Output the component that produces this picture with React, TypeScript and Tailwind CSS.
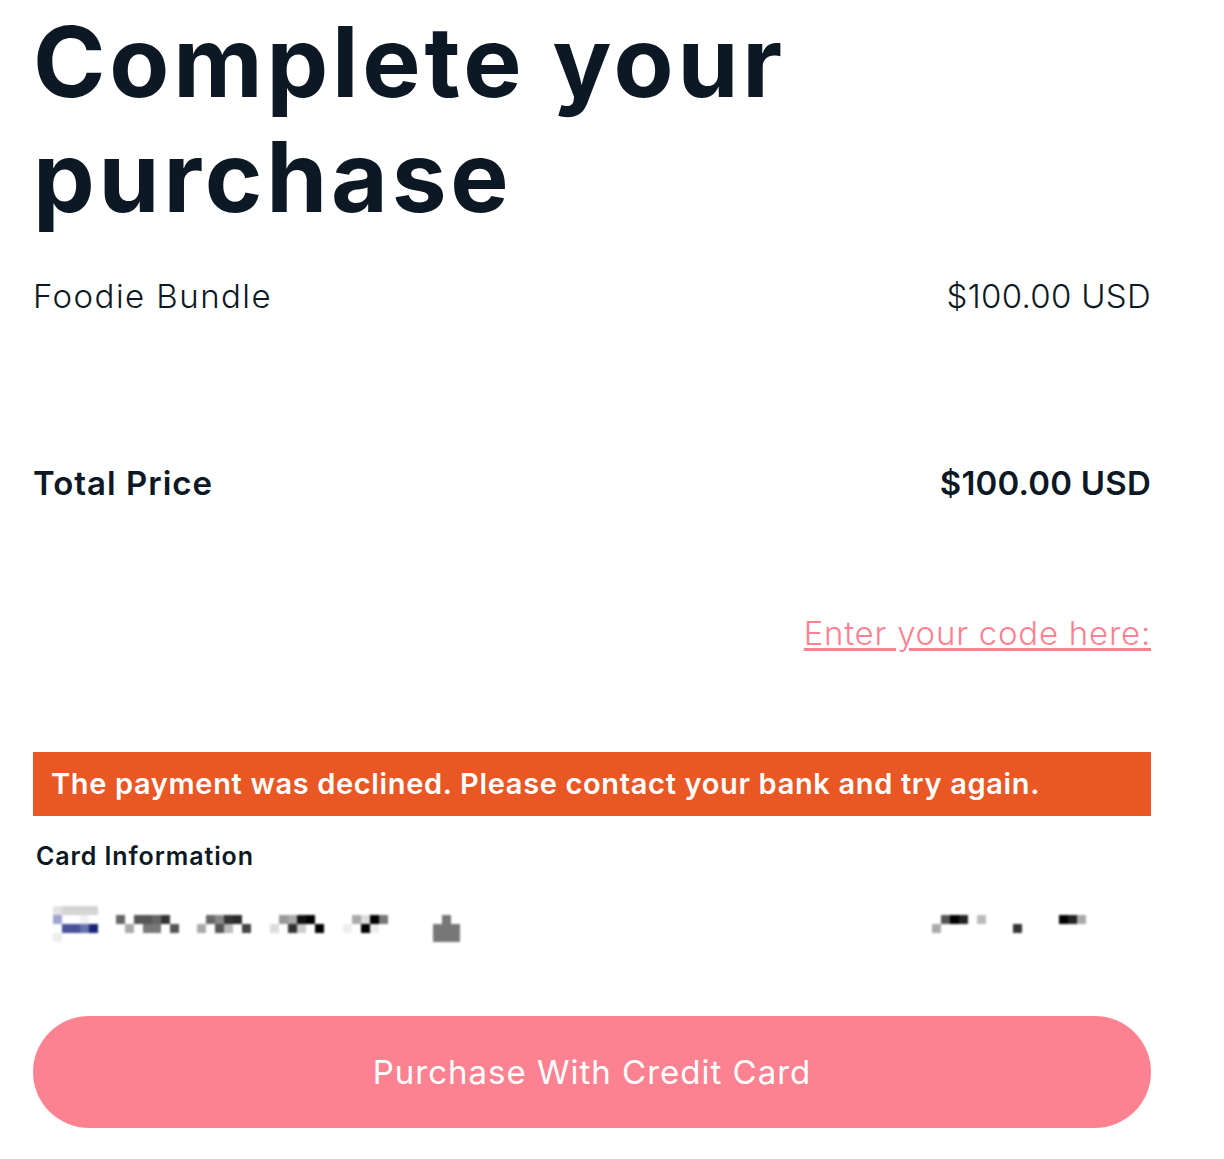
const pixels: [number, number, string][] = [
  // card brand icon
  [53, 906, '#e2e2e2'], [62, 906, '#d4d4d4'], [71, 906, '#d4d4d4'], [80, 906, '#d4d4d4'], [89, 906, '#d4d4d4'],
  [53, 915, '#a0a4d0'], [80, 915, '#f0f0f8'],
  [62, 924, '#4a5298'], [71, 924, '#4a5298'], [80, 924, '#6a70a8'], [89, 924, '#1a2478'],
  [53, 933, '#eeeeee'],
  // card number
  [116, 915, '#666666'], [134, 915, '#555555'], [143, 915, '#555555'], [152, 915, '#666666'], [161, 915, '#333333'],
  [125, 924, '#aaaaaa'], [143, 924, '#777777'], [152, 924, '#777777'], [170, 924, '#555555'],
  [206, 915, '#666666'], [215, 915, '#888888'], [224, 915, '#333333'], [233, 915, '#2a2a2a'],
  [197, 924, '#aaaaaa'], [215, 924, '#555555'], [224, 924, '#bbbbbb'], [242, 924, '#444444'],
  [279, 915, '#999999'], [288, 915, '#aaaaaa'], [297, 915, '#111111'], [306, 915, '#000000'],
  [270, 924, '#dddddd'], [288, 924, '#333333'], [297, 924, '#cccccc'], [315, 924, '#000000'],
  [352, 915, '#aaaaaa'], [361, 915, '#dddddd'], [370, 915, '#000000'], [379, 915, '#777777'],
  [343, 924, '#eeeeee'], [361, 924, '#000000'], [370, 924, '#eeeeee'],
  [442, 915, '#777777'],
  [433, 924, '#777777'], [442, 924, '#777777'], [451, 924, '#777777'],
  [433, 933, '#777777'], [442, 933, '#777777'], [451, 933, '#777777'],
  // expiry and cvc
  [941, 915, '#555555'], [950, 915, '#000000'], [959, 915, '#222222'], [977, 915, '#bbbbbb'],
  [1059, 915, '#000000'], [1068, 915, '#222222'], [1077, 915, '#aaaaaa'],
  [932, 924, '#aaaaaa'], [1013, 924, '#333333'],
];

export default function App() {
  return (
    <div className="min-h-[1159px] bg-white pl-[33px] font-['Inter',sans-serif] text-[#0c1823]">
      <div className="w-[1118px]">
        <h1 className="w-[900px] pt-[4px] text-[98px] leading-[115px] font-bold tracking-[3.8px]">
          Complete your purchase
        </h1>

        <div className="mt-[42px] flex items-center justify-between text-[33px] leading-[40px] font-light">
          <span className="tracking-[1.45px]">Foodie Bundle</span>
          <span className="tracking-[0.3px]">$100.00 USD</span>
        </div>

        <div className="mt-[147px] flex items-center justify-between text-[33px] leading-[40px] font-semibold">
          <span className="tracking-[1px]">Total Price</span>
          <span className="tracking-[0.2px]">$100.00 USD</span>
        </div>

        <div className="mt-[110px] text-right text-[33px] leading-[40px] font-light tracking-[0.76px] text-[#fd8291]">
          <a className="underline underline-offset-[3px]">Enter your code here:</a>
        </div>

        <div className="mt-[99px] flex h-[64px] items-center bg-[#e95725] pl-[18px] text-[29px] font-semibold tracking-[0.66px] text-white">
          The payment was declined. Please contact your bank and try again.
        </div>

        <div className="mt-[24px] pl-[3px] text-[25px] leading-[32px] font-semibold tracking-[0.9px]">Card Information</div>

        {/* blurred card input */}
        <div className="mt-[18px] h-[62px]">
          <svg width="1118" height="62" viewBox="33 890 1118 62" className="block blur-[0.8px]">
            {pixels.map(([x, y, fill]) => (
              <rect key={`${x}-${y}`} x={x} y={y} width="9" height="9" fill={fill} />
            ))}
          </svg>
        </div>

        <button className="mt-[64px] h-[112px] w-full rounded-[56px] bg-[#fd8291] pt-[2px] text-[33px] tracking-[1px] text-white">
          Purchase With Credit Card
        </button>
      </div>
    </div>
  );
}
